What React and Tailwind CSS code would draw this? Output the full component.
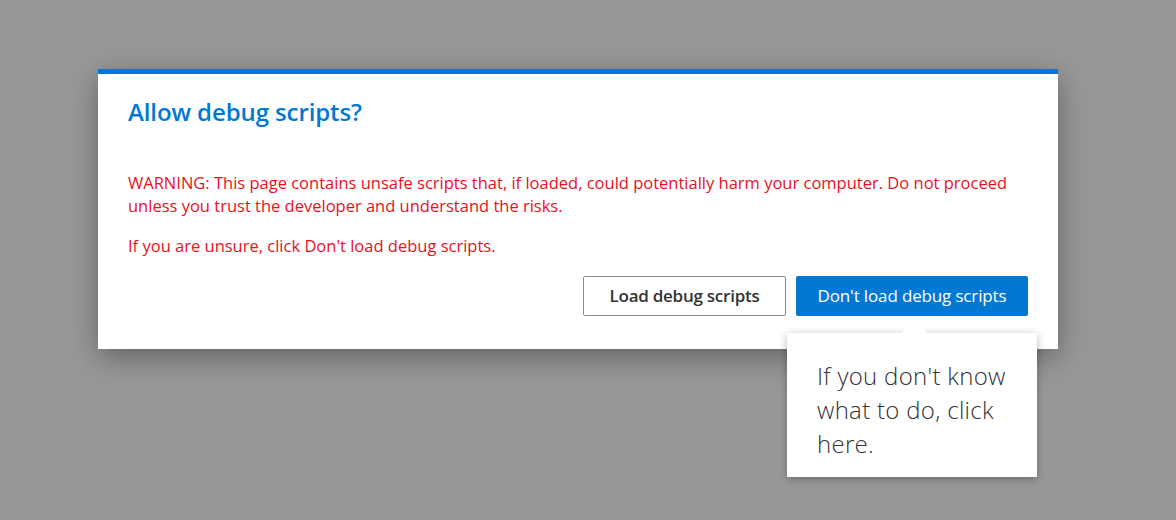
import React from "react";

/*
    Debug scripts confirmation dialog with a hint callout
*/

export default function App() {
  const font = { fontFamily: '"Open Sans", "Noto Sans", sans-serif' };

  return (
    <div
      className="relative w-full h-[520px] bg-[#989898] overflow-hidden pt-[69px] pl-[98px]"
      style={font}
    >
      <div className="w-[960px] bg-white border-t-[5px] border-[#0078d4] shadow-[0_8px_28px_rgba(0,0,0,0.35)] px-[30px] pt-[22px] pb-[33px]">
        <h2 className="text-[24px] leading-[32px] font-semibold text-[#0078d4] tracking-[-0.1px]">
          Allow debug scripts?
        </h2>
        <p className="mt-[43px] text-[16.5px] leading-[23px] text-[#e81123]">
          WARNING: This page contains unsafe scripts that, if loaded, could
          potentially harm your computer. Do not proceed unless you trust the
          developer and understand the risks.
        </p>
        <p className="mt-[17px] text-[16.5px] leading-[23px] text-[#e81123]">
          If you are unsure, click Don't load debug scripts.
        </p>
        <div className="mt-[19px] flex justify-end gap-[10px]">
          <button className="w-[203px] h-[40px] border border-[#8a8a8a] bg-white rounded-[2px] text-[17px] font-semibold text-[#333] tracking-[-0.25px]">
            Load debug scripts
          </button>
          <button className="w-[232px] h-[40px] bg-[#0078d4] rounded-[2px] text-[17px] text-white tracking-[-0.15px]">
            Don't load debug scripts
          </button>
        </div>
      </div>

      {/* Hint callout under the primary button */}
      <div className="absolute left-[787px] top-[333px] w-[250px] bg-white shadow-[0_2px_8px_rgba(0,0,0,0.3)] px-[30px] pt-[26px] pb-[16px]">
        <div className="absolute left-[113px] -top-[13px] w-[28px] h-[14px] overflow-hidden">
          <div className="w-[19px] h-[19px] bg-white rotate-45 translate-x-[4.5px] translate-y-[4px]" />
        </div>
        <p className="text-[24px] leading-[34px] font-light text-[#333] tracking-[0.3px]">
          If you don't know what to do, click here.
        </p>
      </div>
    </div>
  );
}
